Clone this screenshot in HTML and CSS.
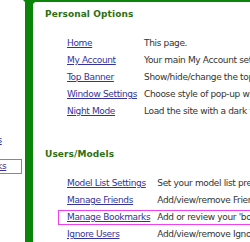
FILE: index.html
```html
<!DOCTYPE html>
<html>
<head>
<meta charset="utf-8">
<link rel="stylesheet" href="styles.css">
</head>
<body>
<div class="page">
  <nav class="nav">
    <ul class="nav-list">
      <li><a href="#">Model List Settings</a></li>
      <li class="hl"><a href="#">Manage Bookmarks</a></li>
    </ul>
  </nav>
  <main class="content">
    <h2 class="section-title">Personal Options</h2>
    <table class="opts">
      <tr><td class="lk"><a href="#">Home</a></td><td>This page.</td></tr>
      <tr><td class="lk"><a href="#">My Account</a></td><td>Your main My Account settings.</td></tr>
      <tr><td class="lk"><a href="#">Top Banner</a></td><td>Show/hide/change the top banner.</td></tr>
      <tr><td class="lk"><a href="#">Window Settings</a></td><td>Choose style of pop-up windows.</td></tr>
      <tr><td class="lk"><a href="#">Night Mode</a></td><td>Load the site with a dark theme.</td></tr>
    </table>
    <h2 class="section-title second">Users/Models</h2>
    <table class="opts">
      <tr><td class="lk"><a href="#">Model List Settings</a></td><td>Set your model list preferences.</td></tr>
      <tr><td class="lk"><a href="#">Manage Friends</a></td><td>Add/view/remove Friends.</td></tr>
      <tr class="hl"><td class="lk"><a href="#">Manage Bookmarks</a></td><td>Add or review your 'bookmarked' models.</td></tr>
      <tr><td class="lk"><a href="#">Ignore Users</a></td><td>Add/view/remove Ignored users.</td></tr>
    </table>
  </main>
</div>
</body>
</html>
```
FILE: styles.css
```css
html, body {
  margin: 0;
  padding: 0;
  overflow: hidden;
  background: #fff;
}
body {
  font-family: "DejaVu Sans", Verdana, sans-serif;
  font-size: 9px;
  letter-spacing: -0.35px;
  color: #333;
  width: 250px;
  height: 242px;
}
a {
  color: #33339a;
  text-decoration: underline;
}
.page {
  display: flex;
  height: 242px;
}
.nav {
  width: 25px;
  flex-shrink: 0;
  overflow: hidden;
  padding-top: 134px;
  box-sizing: border-box;
  background: radial-gradient(circle 3px at 0 3px, transparent 2.6px, #0a850a 3.2px) right top / 3px 3px no-repeat;
}
.nav-list {
  list-style: none;
  margin: 0 0 0 -81px;
  padding: 0;
  width: 102px;
}
.nav-list li {
  height: 13px;
  line-height: 13px;
  padding-left: 4px;
  white-space: nowrap;
}
.nav-list li.hl {
  margin-top: 13px;
  outline: 1px solid #f040f0;
}
.content {
  flex: 1;
  min-width: 0;
  overflow: hidden;
  border-left: 8px solid #0a850a;
  border-top: 2px solid #0a850a;
  padding: 6px 0 0 12px;
  background: radial-gradient(circle 3px at 3px 3px, transparent 2.6px, #0a850a 3.2px) 0 0 / 3px 3px no-repeat;
  background-origin: padding-box;
}
.section-title {
  margin: 0 0 15px;
  font-size: 9px;
  line-height: 12px;
  font-weight: bold;
  letter-spacing: 0.1px;
  color: #2f6e14;
}
.section-title.second {
  margin-top: 28px;
}
.opts {
  border-collapse: separate;
  border-spacing: 0;
  margin-left: 12px;
  white-space: nowrap;
}
.opts td {
  height: 17px;
  line-height: 13px;
  padding: 0;
  vertical-align: middle;
}
.opts td.lk {
  padding-left: 10px;
  padding-right: 7px;
}
.opts tr.hl {
  outline: 1px solid #f040f0;
  outline-offset: -2px;
}
```
